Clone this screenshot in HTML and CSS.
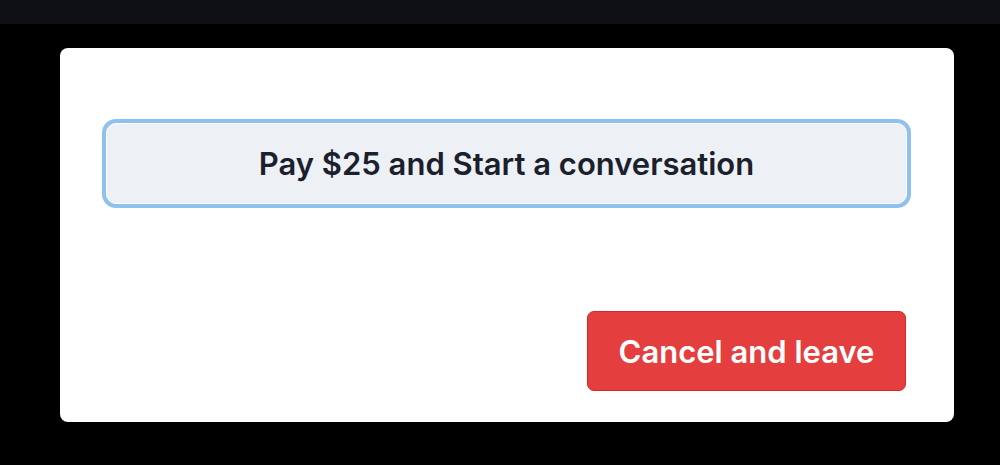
FILE: index.html
```html
<!DOCTYPE html>
<html>
<head>
<meta charset="utf-8">
<link rel="stylesheet" href="styles.css">
</head>
<body>
<div class="topbar"></div>
<div class="stage">
  <div class="card">
    <button class="pay">Pay $25 and Start a conversation</button>
    <div class="actions">
      <button class="cancel">Cancel and leave</button>
    </div>
  </div>
</div>
</body>
</html>
```
FILE: styles.css
```css
html, body {
  margin: 0;
  padding: 0;
  background: #000;
  font-family: Inter, "Noto Sans", sans-serif;
}
.topbar {
  height: 24px;
  background: #0e0f15;
}
.stage {
  padding: 24px 46px 0 60px;
}
.card {
  width: 894px;
  height: 374px;
  box-sizing: border-box;
  background: #fff;
  border-radius: 8px;
  padding: 75px 48px 31px 46px;
  display: flex;
  flex-direction: column;
  justify-content: space-between;
}
.pay {
  height: 81px;
  width: 801px;
  box-sizing: border-box;
  background: #edf1f6;
  border: 1px solid #ffffff;
  border-radius: 10px;
  box-shadow: 0 0 0 4px #8fc1ee;
  color: #1a202c;
  font-family: Inter, "Noto Sans", sans-serif;
  font-weight: 600;
  font-size: 31px;
  padding: 0;
  cursor: pointer;
}
.actions {
  display: flex;
  justify-content: flex-end;
}
.cancel {
  width: 319px;
  height: 80px;
  box-sizing: border-box;
  background: #e53e3e;
  border: 1px solid #d62828;
  border-radius: 7px;
  color: #fff;
  font-family: Inter, "Noto Sans", sans-serif;
  font-weight: 600;
  font-size: 31px;
  padding: 0;
  cursor: pointer;
}
```
